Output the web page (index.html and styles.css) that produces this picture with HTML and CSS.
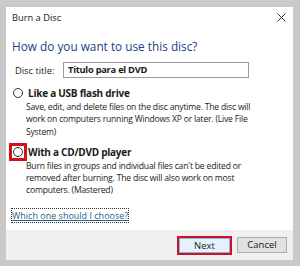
FILE: index.html
```html
<!DOCTYPE html>
<html>
<head>
<title>Burn a Disc</title>
<link rel="stylesheet" href="styles.css">
</head>
<body>
<div class="dialog">
  <div class="titlebar">
    <span class="title">Burn a Disc</span>
    <svg class="close" width="9" height="9" viewBox="0 0 9 9"><path d="M0.5 0.5 L8.5 8.5 M8.5 0.5 L0.5 8.5" stroke="#333" stroke-width="1"/></svg>
  </div>
  <div class="content">
    <div class="heading">How do you want to use this disc?</div>
    <div class="title-row">
      <label>Disc title:</label>
      <div class="textbox">Titulo para el DVD</div>
    </div>
    <div class="option">
      <div class="option-head"><span class="radio-slot"><span class="radio"></span></span><b>Like a USB flash drive</b></div>
      <div class="desc">Save, edit, and delete files on the disc anytime. The disc will<br>work on computers running Windows XP or later. (Live File<br>System)</div>
    </div>
    <div class="option second">
      <div class="option-head"><span class="radio-slot marked"><span class="radio"></span></span><b>With a CD/DVD player</b></div>
      <div class="desc">Burn files in groups and individual files can't be edited or<br>removed after burning. The disc will also work on most<br>computers. (Mastered)</div>
    </div>
    <a class="help" href="#">Which one should I choose?</a>
  </div>
  <div class="footer">
    <span class="button primary">Next</span>
    <span class="button">Cancel</span>
  </div>
</div>
</body>
</html>
```

FILE: styles.css
```css
body {
  margin: 0;
  background: #c9c9c9;
  font-family: "Open Sans", "Noto Sans", sans-serif;
  font-size: 9.5px;
  color: #1a1a1a;
}
.dialog {
  margin: 7px 7px 6px 6px;
  background: #ffffff;
  height: 253px;
  display: flex;
  flex-direction: column;
}
.titlebar {
  display: flex;
  justify-content: space-between;
  align-items: center;
  height: 20px;
  padding: 0 6px 0 6px;
}
.title {
  font-size: 9.3px;
  color: #222;
}
.close {
  margin-right: 1px;
}
.content {
  flex: 1;
  padding: 0 6px;
}
.heading {
  font-size: 11.8px;
  line-height: 16px;
  color: #233e86;
  margin-top: 11px;
}
.title-row {
  display: flex;
  align-items: center;
  margin-top: 8px;
  padding-left: 3px;
}
.title-row label {
  width: 48px;
  font-size: 9.3px;
}
.textbox {
  width: 176px;
  height: 14px;
  border: 1px solid #9a9a9a;
  padding: 0 4px;
  font-weight: bold;
  font-size: 9.3px;
  letter-spacing: -0.25px;
  line-height: 14px;
}
.option {
  margin-top: 8px;
}
.option.second {
  margin-top: 7px;
}
.option-head {
  display: flex;
  align-items: center;
  font-size: 10px;
  letter-spacing: -0.25px;
  height: 14px;
}
.option-head b {
  margin-left: 1px;
}
.radio-slot {
  display: inline-flex;
  align-items: center;
  justify-content: center;
  width: 12px;
  height: 12px;
  border: 3px solid transparent;
  margin-left: -3px;
}
.radio-slot.marked {
  border-color: #d0121d;
}
.radio {
  display: inline-block;
  width: 8px;
  height: 8px;
  border: 1px solid #333;
  border-radius: 50%;
}
.desc {
  margin-left: 14px;
  line-height: 12.3px;
  margin-top: 1px;
  font-size: 8.6px;
  letter-spacing: -0.2px;
  white-space: nowrap;
  color: #222;
}
a.help {
  display: inline-block;
  margin-top: 12px;
  font-size: 9px;
  line-height: 13px;
  color: #2a5f86;
  outline: 1px dotted #333;
}
.footer {
  background: #f0f0f0;
  height: 30px;
  display: flex;
  justify-content: flex-end;
  align-items: center;
  gap: 5px;
  padding-right: 6px;
}
.button {
  width: 48px;
  height: 14px;
  border: 1px solid #adadad;
  background: #e1e1e1;
  text-align: center;
  line-height: 14px;
}
.button.primary {
  width: 49px;
  height: 13px;
  line-height: 13px;
  border-color: #7eb4ea;
  background: #e5f1fb;
  box-shadow: 0 0 0 2px #d0121d;
  margin-right: 2px;
}
```
